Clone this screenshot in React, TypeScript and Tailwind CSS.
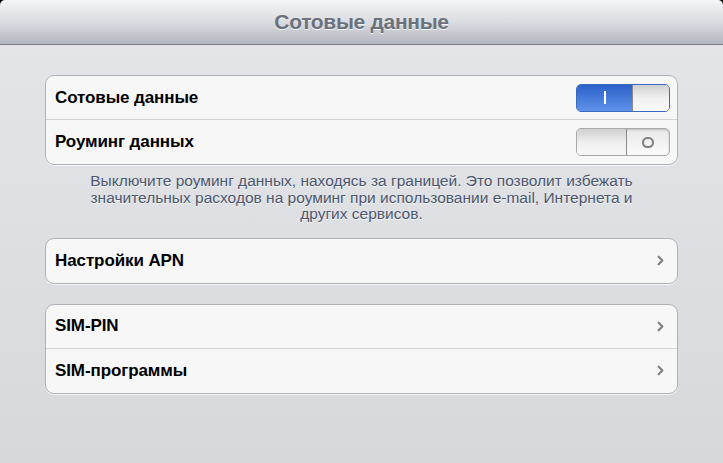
import { ChevronRight } from 'lucide-react';

function Toggle({ on }: { on: boolean }) {
  if (on) {
    return (
      <div className="flex h-[28px] w-[94px] overflow-hidden rounded-[5px] border border-[#3a69c0] shadow-[inset_0_1px_2px_rgba(0,0,0,0.3)]">
        <div className="flex w-[55px] items-center justify-center bg-gradient-to-b from-[#2c61c9] to-[#5f93ea]">
          <div className="h-[13px] w-[2px] bg-white" />
        </div>
        <div className="flex-1 border-l border-[#8a8a8a] bg-gradient-to-b from-[#cfcfcf] via-[#f0f0f0] to-[#fafafa]" />
      </div>
    );
  }
  return (
    <div className="flex h-[28px] w-[94px] overflow-hidden rounded-[5px] border border-[#a9a9a9] bg-gradient-to-b from-[#e8e8e8] to-[#fbfbfb] shadow-[inset_0_1px_2px_rgba(0,0,0,0.2)]">
      <div className="w-[50px] border-r border-[#8a8a8a] bg-gradient-to-b from-[#d0d0d0] via-[#eeeeee] to-[#f8f8f8]" />
      <div className="flex flex-1 items-center justify-center">
        <div className="h-[11px] w-[12px] rounded-full border-2 border-[#7d7d7d]" />
      </div>
    </div>
  );
}

function Row({ label, right, last }: { label: string; right?: React.ReactNode; last?: boolean }) {
  return (
    <div
      className={`flex h-[44px] items-center justify-between pl-[9px] pr-[7px] ${last ? '' : 'border-b border-[#d2d2d4]'}`}
    >
      <span className="text-[17px] font-bold tracking-[-0.1px] text-black">{label}</span>
      {right ?? <ChevronRight className="mr-[2px] h-[15px] w-[15px] text-[#7f7f7f]" strokeWidth={3.5} />}
    </div>
  );
}

function Group({ children }: { children: React.ReactNode }) {
  return (
    <div className="mx-[45px] overflow-hidden rounded-[9px] border border-[#aeb1b6] bg-[#f7f7f7] shadow-[0_1px_0_rgba(255,255,255,0.7)]">
      {children}
    </div>
  );
}

export default function App() {
  return (
    <div
      className="flex h-[463px] w-[723px] flex-col bg-black"
      style={{ fontFamily: '"Liberation Sans", Arial, sans-serif' }}
    >
      <div className="flex h-[45px] shrink-0 items-center justify-center rounded-t-[5px] border-b border-[#7b7f88] bg-gradient-to-b from-[#f4f5f7] via-[#dadce1] to-[#b2b6bf]">
        <h1 className="text-[21px] font-bold tracking-[-0.3px] text-[#6b717d] [text-shadow:0_1px_0_rgba(255,255,255,0.8)]">
          Сотовые данные
        </h1>
      </div>
      <div className="flex flex-1 flex-col bg-gradient-to-b from-[#e3e5e9] to-[#d6d8dc] pt-[30px]">
        <Group>
          <Row label="Сотовые данные" right={<Toggle on />} />
          <Row label="Роуминг данных" right={<Toggle on={false} />} last />
        </Group>
        <p className="mx-auto mt-[8px] w-[570px] text-center text-[15.5px] leading-[16.5px] text-[#4c566c] [text-shadow:0_1px_0_rgba(255,255,255,0.8)]">
          Выключите роуминг данных, находясь за границей. Это позволит избежать значительных расходов на роуминг при
          использовании e-mail, Интернета и других сервисов.
        </p>
        <div className="mt-[15px]">
          <Group>
            <Row label="Настройки APN" last />
          </Group>
        </div>
        <div className="mt-[20px]">
          <Group>
            <Row label="SIM-PIN" />
            <Row label="SIM-программы" last />
          </Group>
        </div>
      </div>
    </div>
  );
}
